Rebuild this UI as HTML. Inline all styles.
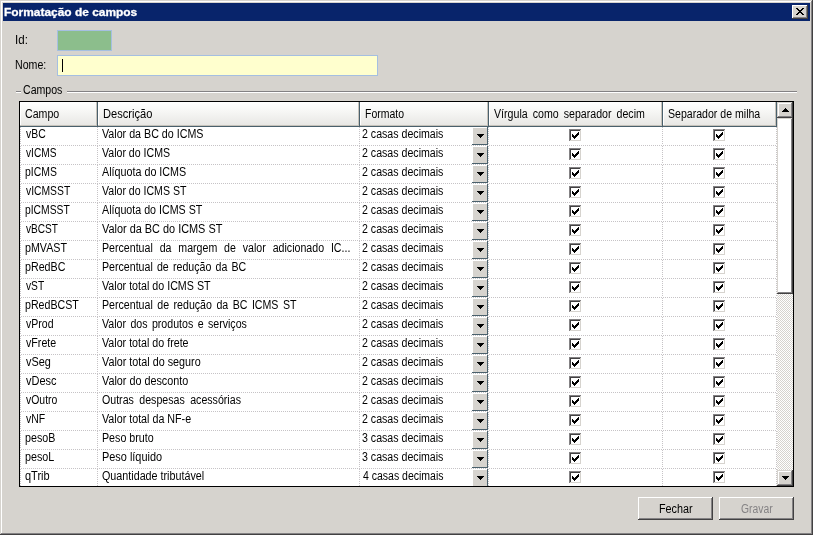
<!DOCTYPE html><html><head><meta charset="utf-8"><title>Formatação de campos</title><style>
html,body{margin:0;padding:0;background:#d6d3ce;}
body{width:813px;height:535px;overflow:hidden;background:#d6d3ce;font-family:"Liberation Sans",sans-serif;font-size:12px;color:#000;position:relative;}
.abs{position:absolute;}
#win{position:absolute;left:0;top:0;width:813px;height:535px;background:#d6d3ce;overflow:hidden;}
.b{position:absolute;}
#txt{position:absolute;left:0;top:0;width:813px;height:535px;will-change:transform;}
.t{position:absolute;display:block;white-space:nowrap;line-height:16px;height:16px;transform-origin:0 0;font-size:12px;}
#title{position:absolute;left:3px;top:3px;width:807px;height:18px;background:#08246b;}
#close{position:absolute;left:792px;top:5px;width:16px;height:14px;background:#d6d3ce;box-shadow:inset -1px -1px 0 #424142,inset 1px 1px 0 #fff,inset -2px -2px 0 #848284,inset 2px 2px 0 #d6d3ce;}
#idbox{position:absolute;left:57px;top:30px;width:55px;height:21px;box-sizing:border-box;border:1px solid #a5bfe1;background:#8cbe8c;}
#nomebox{position:absolute;left:57px;top:55px;width:321px;height:21px;box-sizing:border-box;border:1px solid #a5bfe1;background:#ffffce;}
#caret{position:absolute;left:62px;top:59px;width:1px;height:13px;background:#000;}
.gl{position:absolute;height:1px;}
#grid{position:absolute;left:19px;top:101px;width:775px;height:386px;box-sizing:border-box;border:1px solid #000;background:#fff;overflow:hidden;}
.hc{position:absolute;top:0;height:25px;background:linear-gradient(#ffffff 0%,#f6f6f4 40%,#e6e5e2 100%);box-shadow:inset 0 -1px 0 #4a606c,inset -1px 0 0 #4a606c,inset -2px -2px 0 #c6c2ba,inset 1px 1px 0 #fff;}
.hl{position:absolute;left:1px;width:756px;height:1px;background:repeating-linear-gradient(90deg,#c6c3c6 0 1px,transparent 1px 2px);}
.vl{position:absolute;width:1px;height:18px;background:repeating-linear-gradient(180deg,#c6c3c6 0 1px,transparent 1px 2px);}
.cb{position:absolute;width:13px;height:13px;background:#fff;box-shadow:inset -1px -1px 0 #fff,inset 1px 1px 0 #848284,inset -2px -2px 0 #d6d3ce,inset 2px 2px 0 #424142;}
.cb svg{position:absolute;left:3px;top:3px;}
.dd{position:absolute;left:452px;width:15px;height:18px;}
.dd u{position:absolute;left:1px;top:1px;width:14px;height:16px;background:#d6d3ce;}
.dd b{position:absolute;left:15px;top:0;width:1px;height:18px;background:#4a606c;}
.dd s{position:absolute;left:0;top:17px;width:16px;height:1px;background:#4a606c;}
.dd svg{position:absolute;left:5px;top:7px;}
.btn{position:absolute;top:497px;width:75px;height:23px;background:#d6d3ce;box-shadow:inset -1px -1px 0 #424142,inset 1px 1px 0 #fff,inset -2px -2px 0 #848284,inset 2px 2px 0 #d6d3ce;}
.sbb{position:absolute;left:757px;width:16px;height:16px;background:#d6d3ce;box-shadow:inset -1px -1px 0 #424142,inset 1px 1px 0 #d6d3ce,inset -2px -2px 0 #848284,inset 2px 2px 0 #fff;}
.sbb svg{position:absolute;}
</style></head><body>
<div id="win">
<div class="b" style="left:1px;top:1px;width:810px;height:1px;background:#fff"></div>
<div class="b" style="left:1px;top:1px;width:1px;height:532px;background:#fff"></div>
<div class="b" style="left:811px;top:1px;width:1px;height:533px;background:#848284"></div>
<div class="b" style="left:1px;top:533px;width:811px;height:1px;background:#848284"></div>
<div class="b" style="left:812px;top:0;width:1px;height:535px;background:#424142"></div>
<div class="b" style="left:0;top:534px;width:813px;height:1px;background:#424142"></div>
<div id="title"></div>
<div id="close"><svg class="abs" style="left:4px;top:3px" width="8" height="7" viewBox="0 0 8 7"><path d="M0 0h2v1h1v1h2v-1h1v-1h2v1h-1v1h-1v1h-1v1h1v1h1v1h1v1h-2v-1h-1v-1h-2v1h-1v1h-2v-1h1v-1h1v-1h1v-1h-1v-1h-1v-1h-1z" fill="#000"/></svg></div>
<div id="idbox"></div>
<div id="nomebox"></div><div id="caret"></div>
<div class="gl" style="left:16px;top:91px;width:5px;background:#848284"></div>
<div class="gl" style="left:16px;top:92px;width:5px;background:#fff"></div>
<div class="gl" style="left:67px;top:91px;width:730px;background:#848284"></div>
<div class="gl" style="left:67px;top:92px;width:730px;background:#fff"></div>
<div id="grid">
<div class="hc" style="left:0px;width:78px"></div>
<div class="hc" style="left:78px;width:262px"></div>
<div class="hc" style="left:340px;width:129px"></div>
<div class="hc" style="left:469px;width:174px"></div>
<div class="hc" style="left:643px;width:114px"></div>
<div class="hl" style="top:43px"></div>
<div class="vl" style="left:0px;top:25px"></div>
<div class="vl" style="left:77px;top:25px"></div>
<div class="vl" style="left:339px;top:25px"></div>
<div class="vl" style="left:468px;top:25px"></div>
<div class="vl" style="left:642px;top:25px"></div>
<div class="vl" style="left:756px;top:25px"></div>
<div class="dd" style="top:25px"><u></u><b></b><s></s><svg width="7" height="4" viewBox="0 0 7 4"><path d="M0 0h7v1h-1v1h-1v1h-1v1h-1v-1h-1v-1h-1v-1h-1z" fill="#000"/></svg></div>
<div class="cb" style="left:549px;top:27px"><svg width="7" height="7" viewBox="0 0 7 7"><path d="M0 2v3h1v1h1v1h1v-1h1v-1h1v-1h1v-1h1v-3h-1v1h-1v1h-1v1h-1v1h-1v-1h-1v-1z" fill="#000"/></svg></div>
<div class="cb" style="left:693px;top:27px"><svg width="7" height="7" viewBox="0 0 7 7"><path d="M0 2v3h1v1h1v1h1v-1h1v-1h1v-1h1v-1h1v-3h-1v1h-1v1h-1v1h-1v1h-1v-1h-1v-1z" fill="#000"/></svg></div>
<div class="hl" style="top:62px"></div>
<div class="vl" style="left:0px;top:44px"></div>
<div class="vl" style="left:77px;top:44px"></div>
<div class="vl" style="left:339px;top:44px"></div>
<div class="vl" style="left:468px;top:44px"></div>
<div class="vl" style="left:642px;top:44px"></div>
<div class="vl" style="left:756px;top:44px"></div>
<div class="dd" style="top:44px"><u></u><b></b><s></s><svg width="7" height="4" viewBox="0 0 7 4"><path d="M0 0h7v1h-1v1h-1v1h-1v1h-1v-1h-1v-1h-1v-1h-1z" fill="#000"/></svg></div>
<div class="cb" style="left:549px;top:46px"><svg width="7" height="7" viewBox="0 0 7 7"><path d="M0 2v3h1v1h1v1h1v-1h1v-1h1v-1h1v-1h1v-3h-1v1h-1v1h-1v1h-1v1h-1v-1h-1v-1z" fill="#000"/></svg></div>
<div class="cb" style="left:693px;top:46px"><svg width="7" height="7" viewBox="0 0 7 7"><path d="M0 2v3h1v1h1v1h1v-1h1v-1h1v-1h1v-1h1v-3h-1v1h-1v1h-1v1h-1v1h-1v-1h-1v-1z" fill="#000"/></svg></div>
<div class="hl" style="top:81px"></div>
<div class="vl" style="left:0px;top:63px"></div>
<div class="vl" style="left:77px;top:63px"></div>
<div class="vl" style="left:339px;top:63px"></div>
<div class="vl" style="left:468px;top:63px"></div>
<div class="vl" style="left:642px;top:63px"></div>
<div class="vl" style="left:756px;top:63px"></div>
<div class="dd" style="top:63px"><u></u><b></b><s></s><svg width="7" height="4" viewBox="0 0 7 4"><path d="M0 0h7v1h-1v1h-1v1h-1v1h-1v-1h-1v-1h-1v-1h-1z" fill="#000"/></svg></div>
<div class="cb" style="left:549px;top:65px"><svg width="7" height="7" viewBox="0 0 7 7"><path d="M0 2v3h1v1h1v1h1v-1h1v-1h1v-1h1v-1h1v-3h-1v1h-1v1h-1v1h-1v1h-1v-1h-1v-1z" fill="#000"/></svg></div>
<div class="cb" style="left:693px;top:65px"><svg width="7" height="7" viewBox="0 0 7 7"><path d="M0 2v3h1v1h1v1h1v-1h1v-1h1v-1h1v-1h1v-3h-1v1h-1v1h-1v1h-1v1h-1v-1h-1v-1z" fill="#000"/></svg></div>
<div class="hl" style="top:100px"></div>
<div class="vl" style="left:0px;top:82px"></div>
<div class="vl" style="left:77px;top:82px"></div>
<div class="vl" style="left:339px;top:82px"></div>
<div class="vl" style="left:468px;top:82px"></div>
<div class="vl" style="left:642px;top:82px"></div>
<div class="vl" style="left:756px;top:82px"></div>
<div class="dd" style="top:82px"><u></u><b></b><s></s><svg width="7" height="4" viewBox="0 0 7 4"><path d="M0 0h7v1h-1v1h-1v1h-1v1h-1v-1h-1v-1h-1v-1h-1z" fill="#000"/></svg></div>
<div class="cb" style="left:549px;top:84px"><svg width="7" height="7" viewBox="0 0 7 7"><path d="M0 2v3h1v1h1v1h1v-1h1v-1h1v-1h1v-1h1v-3h-1v1h-1v1h-1v1h-1v1h-1v-1h-1v-1z" fill="#000"/></svg></div>
<div class="cb" style="left:693px;top:84px"><svg width="7" height="7" viewBox="0 0 7 7"><path d="M0 2v3h1v1h1v1h1v-1h1v-1h1v-1h1v-1h1v-3h-1v1h-1v1h-1v1h-1v1h-1v-1h-1v-1z" fill="#000"/></svg></div>
<div class="hl" style="top:119px"></div>
<div class="vl" style="left:0px;top:101px"></div>
<div class="vl" style="left:77px;top:101px"></div>
<div class="vl" style="left:339px;top:101px"></div>
<div class="vl" style="left:468px;top:101px"></div>
<div class="vl" style="left:642px;top:101px"></div>
<div class="vl" style="left:756px;top:101px"></div>
<div class="dd" style="top:101px"><u></u><b></b><s></s><svg width="7" height="4" viewBox="0 0 7 4"><path d="M0 0h7v1h-1v1h-1v1h-1v1h-1v-1h-1v-1h-1v-1h-1z" fill="#000"/></svg></div>
<div class="cb" style="left:549px;top:103px"><svg width="7" height="7" viewBox="0 0 7 7"><path d="M0 2v3h1v1h1v1h1v-1h1v-1h1v-1h1v-1h1v-3h-1v1h-1v1h-1v1h-1v1h-1v-1h-1v-1z" fill="#000"/></svg></div>
<div class="cb" style="left:693px;top:103px"><svg width="7" height="7" viewBox="0 0 7 7"><path d="M0 2v3h1v1h1v1h1v-1h1v-1h1v-1h1v-1h1v-3h-1v1h-1v1h-1v1h-1v1h-1v-1h-1v-1z" fill="#000"/></svg></div>
<div class="hl" style="top:138px"></div>
<div class="vl" style="left:0px;top:120px"></div>
<div class="vl" style="left:77px;top:120px"></div>
<div class="vl" style="left:339px;top:120px"></div>
<div class="vl" style="left:468px;top:120px"></div>
<div class="vl" style="left:642px;top:120px"></div>
<div class="vl" style="left:756px;top:120px"></div>
<div class="dd" style="top:120px"><u></u><b></b><s></s><svg width="7" height="4" viewBox="0 0 7 4"><path d="M0 0h7v1h-1v1h-1v1h-1v1h-1v-1h-1v-1h-1v-1h-1z" fill="#000"/></svg></div>
<div class="cb" style="left:549px;top:122px"><svg width="7" height="7" viewBox="0 0 7 7"><path d="M0 2v3h1v1h1v1h1v-1h1v-1h1v-1h1v-1h1v-3h-1v1h-1v1h-1v1h-1v1h-1v-1h-1v-1z" fill="#000"/></svg></div>
<div class="cb" style="left:693px;top:122px"><svg width="7" height="7" viewBox="0 0 7 7"><path d="M0 2v3h1v1h1v1h1v-1h1v-1h1v-1h1v-1h1v-3h-1v1h-1v1h-1v1h-1v1h-1v-1h-1v-1z" fill="#000"/></svg></div>
<div class="hl" style="top:157px"></div>
<div class="vl" style="left:0px;top:139px"></div>
<div class="vl" style="left:77px;top:139px"></div>
<div class="vl" style="left:339px;top:139px"></div>
<div class="vl" style="left:468px;top:139px"></div>
<div class="vl" style="left:642px;top:139px"></div>
<div class="vl" style="left:756px;top:139px"></div>
<div class="dd" style="top:139px"><u></u><b></b><s></s><svg width="7" height="4" viewBox="0 0 7 4"><path d="M0 0h7v1h-1v1h-1v1h-1v1h-1v-1h-1v-1h-1v-1h-1z" fill="#000"/></svg></div>
<div class="cb" style="left:549px;top:141px"><svg width="7" height="7" viewBox="0 0 7 7"><path d="M0 2v3h1v1h1v1h1v-1h1v-1h1v-1h1v-1h1v-3h-1v1h-1v1h-1v1h-1v1h-1v-1h-1v-1z" fill="#000"/></svg></div>
<div class="cb" style="left:693px;top:141px"><svg width="7" height="7" viewBox="0 0 7 7"><path d="M0 2v3h1v1h1v1h1v-1h1v-1h1v-1h1v-1h1v-3h-1v1h-1v1h-1v1h-1v1h-1v-1h-1v-1z" fill="#000"/></svg></div>
<div class="hl" style="top:176px"></div>
<div class="vl" style="left:0px;top:158px"></div>
<div class="vl" style="left:77px;top:158px"></div>
<div class="vl" style="left:339px;top:158px"></div>
<div class="vl" style="left:468px;top:158px"></div>
<div class="vl" style="left:642px;top:158px"></div>
<div class="vl" style="left:756px;top:158px"></div>
<div class="dd" style="top:158px"><u></u><b></b><s></s><svg width="7" height="4" viewBox="0 0 7 4"><path d="M0 0h7v1h-1v1h-1v1h-1v1h-1v-1h-1v-1h-1v-1h-1z" fill="#000"/></svg></div>
<div class="cb" style="left:549px;top:160px"><svg width="7" height="7" viewBox="0 0 7 7"><path d="M0 2v3h1v1h1v1h1v-1h1v-1h1v-1h1v-1h1v-3h-1v1h-1v1h-1v1h-1v1h-1v-1h-1v-1z" fill="#000"/></svg></div>
<div class="cb" style="left:693px;top:160px"><svg width="7" height="7" viewBox="0 0 7 7"><path d="M0 2v3h1v1h1v1h1v-1h1v-1h1v-1h1v-1h1v-3h-1v1h-1v1h-1v1h-1v1h-1v-1h-1v-1z" fill="#000"/></svg></div>
<div class="hl" style="top:195px"></div>
<div class="vl" style="left:0px;top:177px"></div>
<div class="vl" style="left:77px;top:177px"></div>
<div class="vl" style="left:339px;top:177px"></div>
<div class="vl" style="left:468px;top:177px"></div>
<div class="vl" style="left:642px;top:177px"></div>
<div class="vl" style="left:756px;top:177px"></div>
<div class="dd" style="top:177px"><u></u><b></b><s></s><svg width="7" height="4" viewBox="0 0 7 4"><path d="M0 0h7v1h-1v1h-1v1h-1v1h-1v-1h-1v-1h-1v-1h-1z" fill="#000"/></svg></div>
<div class="cb" style="left:549px;top:179px"><svg width="7" height="7" viewBox="0 0 7 7"><path d="M0 2v3h1v1h1v1h1v-1h1v-1h1v-1h1v-1h1v-3h-1v1h-1v1h-1v1h-1v1h-1v-1h-1v-1z" fill="#000"/></svg></div>
<div class="cb" style="left:693px;top:179px"><svg width="7" height="7" viewBox="0 0 7 7"><path d="M0 2v3h1v1h1v1h1v-1h1v-1h1v-1h1v-1h1v-3h-1v1h-1v1h-1v1h-1v1h-1v-1h-1v-1z" fill="#000"/></svg></div>
<div class="hl" style="top:214px"></div>
<div class="vl" style="left:0px;top:196px"></div>
<div class="vl" style="left:77px;top:196px"></div>
<div class="vl" style="left:339px;top:196px"></div>
<div class="vl" style="left:468px;top:196px"></div>
<div class="vl" style="left:642px;top:196px"></div>
<div class="vl" style="left:756px;top:196px"></div>
<div class="dd" style="top:196px"><u></u><b></b><s></s><svg width="7" height="4" viewBox="0 0 7 4"><path d="M0 0h7v1h-1v1h-1v1h-1v1h-1v-1h-1v-1h-1v-1h-1z" fill="#000"/></svg></div>
<div class="cb" style="left:549px;top:198px"><svg width="7" height="7" viewBox="0 0 7 7"><path d="M0 2v3h1v1h1v1h1v-1h1v-1h1v-1h1v-1h1v-3h-1v1h-1v1h-1v1h-1v1h-1v-1h-1v-1z" fill="#000"/></svg></div>
<div class="cb" style="left:693px;top:198px"><svg width="7" height="7" viewBox="0 0 7 7"><path d="M0 2v3h1v1h1v1h1v-1h1v-1h1v-1h1v-1h1v-3h-1v1h-1v1h-1v1h-1v1h-1v-1h-1v-1z" fill="#000"/></svg></div>
<div class="hl" style="top:233px"></div>
<div class="vl" style="left:0px;top:215px"></div>
<div class="vl" style="left:77px;top:215px"></div>
<div class="vl" style="left:339px;top:215px"></div>
<div class="vl" style="left:468px;top:215px"></div>
<div class="vl" style="left:642px;top:215px"></div>
<div class="vl" style="left:756px;top:215px"></div>
<div class="dd" style="top:215px"><u></u><b></b><s></s><svg width="7" height="4" viewBox="0 0 7 4"><path d="M0 0h7v1h-1v1h-1v1h-1v1h-1v-1h-1v-1h-1v-1h-1z" fill="#000"/></svg></div>
<div class="cb" style="left:549px;top:217px"><svg width="7" height="7" viewBox="0 0 7 7"><path d="M0 2v3h1v1h1v1h1v-1h1v-1h1v-1h1v-1h1v-3h-1v1h-1v1h-1v1h-1v1h-1v-1h-1v-1z" fill="#000"/></svg></div>
<div class="cb" style="left:693px;top:217px"><svg width="7" height="7" viewBox="0 0 7 7"><path d="M0 2v3h1v1h1v1h1v-1h1v-1h1v-1h1v-1h1v-3h-1v1h-1v1h-1v1h-1v1h-1v-1h-1v-1z" fill="#000"/></svg></div>
<div class="hl" style="top:252px"></div>
<div class="vl" style="left:0px;top:234px"></div>
<div class="vl" style="left:77px;top:234px"></div>
<div class="vl" style="left:339px;top:234px"></div>
<div class="vl" style="left:468px;top:234px"></div>
<div class="vl" style="left:642px;top:234px"></div>
<div class="vl" style="left:756px;top:234px"></div>
<div class="dd" style="top:234px"><u></u><b></b><s></s><svg width="7" height="4" viewBox="0 0 7 4"><path d="M0 0h7v1h-1v1h-1v1h-1v1h-1v-1h-1v-1h-1v-1h-1z" fill="#000"/></svg></div>
<div class="cb" style="left:549px;top:236px"><svg width="7" height="7" viewBox="0 0 7 7"><path d="M0 2v3h1v1h1v1h1v-1h1v-1h1v-1h1v-1h1v-3h-1v1h-1v1h-1v1h-1v1h-1v-1h-1v-1z" fill="#000"/></svg></div>
<div class="cb" style="left:693px;top:236px"><svg width="7" height="7" viewBox="0 0 7 7"><path d="M0 2v3h1v1h1v1h1v-1h1v-1h1v-1h1v-1h1v-3h-1v1h-1v1h-1v1h-1v1h-1v-1h-1v-1z" fill="#000"/></svg></div>
<div class="hl" style="top:271px"></div>
<div class="vl" style="left:0px;top:253px"></div>
<div class="vl" style="left:77px;top:253px"></div>
<div class="vl" style="left:339px;top:253px"></div>
<div class="vl" style="left:468px;top:253px"></div>
<div class="vl" style="left:642px;top:253px"></div>
<div class="vl" style="left:756px;top:253px"></div>
<div class="dd" style="top:253px"><u></u><b></b><s></s><svg width="7" height="4" viewBox="0 0 7 4"><path d="M0 0h7v1h-1v1h-1v1h-1v1h-1v-1h-1v-1h-1v-1h-1z" fill="#000"/></svg></div>
<div class="cb" style="left:549px;top:255px"><svg width="7" height="7" viewBox="0 0 7 7"><path d="M0 2v3h1v1h1v1h1v-1h1v-1h1v-1h1v-1h1v-3h-1v1h-1v1h-1v1h-1v1h-1v-1h-1v-1z" fill="#000"/></svg></div>
<div class="cb" style="left:693px;top:255px"><svg width="7" height="7" viewBox="0 0 7 7"><path d="M0 2v3h1v1h1v1h1v-1h1v-1h1v-1h1v-1h1v-3h-1v1h-1v1h-1v1h-1v1h-1v-1h-1v-1z" fill="#000"/></svg></div>
<div class="hl" style="top:290px"></div>
<div class="vl" style="left:0px;top:272px"></div>
<div class="vl" style="left:77px;top:272px"></div>
<div class="vl" style="left:339px;top:272px"></div>
<div class="vl" style="left:468px;top:272px"></div>
<div class="vl" style="left:642px;top:272px"></div>
<div class="vl" style="left:756px;top:272px"></div>
<div class="dd" style="top:272px"><u></u><b></b><s></s><svg width="7" height="4" viewBox="0 0 7 4"><path d="M0 0h7v1h-1v1h-1v1h-1v1h-1v-1h-1v-1h-1v-1h-1z" fill="#000"/></svg></div>
<div class="cb" style="left:549px;top:274px"><svg width="7" height="7" viewBox="0 0 7 7"><path d="M0 2v3h1v1h1v1h1v-1h1v-1h1v-1h1v-1h1v-3h-1v1h-1v1h-1v1h-1v1h-1v-1h-1v-1z" fill="#000"/></svg></div>
<div class="cb" style="left:693px;top:274px"><svg width="7" height="7" viewBox="0 0 7 7"><path d="M0 2v3h1v1h1v1h1v-1h1v-1h1v-1h1v-1h1v-3h-1v1h-1v1h-1v1h-1v1h-1v-1h-1v-1z" fill="#000"/></svg></div>
<div class="hl" style="top:309px"></div>
<div class="vl" style="left:0px;top:291px"></div>
<div class="vl" style="left:77px;top:291px"></div>
<div class="vl" style="left:339px;top:291px"></div>
<div class="vl" style="left:468px;top:291px"></div>
<div class="vl" style="left:642px;top:291px"></div>
<div class="vl" style="left:756px;top:291px"></div>
<div class="dd" style="top:291px"><u></u><b></b><s></s><svg width="7" height="4" viewBox="0 0 7 4"><path d="M0 0h7v1h-1v1h-1v1h-1v1h-1v-1h-1v-1h-1v-1h-1z" fill="#000"/></svg></div>
<div class="cb" style="left:549px;top:293px"><svg width="7" height="7" viewBox="0 0 7 7"><path d="M0 2v3h1v1h1v1h1v-1h1v-1h1v-1h1v-1h1v-3h-1v1h-1v1h-1v1h-1v1h-1v-1h-1v-1z" fill="#000"/></svg></div>
<div class="cb" style="left:693px;top:293px"><svg width="7" height="7" viewBox="0 0 7 7"><path d="M0 2v3h1v1h1v1h1v-1h1v-1h1v-1h1v-1h1v-3h-1v1h-1v1h-1v1h-1v1h-1v-1h-1v-1z" fill="#000"/></svg></div>
<div class="hl" style="top:328px"></div>
<div class="vl" style="left:0px;top:310px"></div>
<div class="vl" style="left:77px;top:310px"></div>
<div class="vl" style="left:339px;top:310px"></div>
<div class="vl" style="left:468px;top:310px"></div>
<div class="vl" style="left:642px;top:310px"></div>
<div class="vl" style="left:756px;top:310px"></div>
<div class="dd" style="top:310px"><u></u><b></b><s></s><svg width="7" height="4" viewBox="0 0 7 4"><path d="M0 0h7v1h-1v1h-1v1h-1v1h-1v-1h-1v-1h-1v-1h-1z" fill="#000"/></svg></div>
<div class="cb" style="left:549px;top:312px"><svg width="7" height="7" viewBox="0 0 7 7"><path d="M0 2v3h1v1h1v1h1v-1h1v-1h1v-1h1v-1h1v-3h-1v1h-1v1h-1v1h-1v1h-1v-1h-1v-1z" fill="#000"/></svg></div>
<div class="cb" style="left:693px;top:312px"><svg width="7" height="7" viewBox="0 0 7 7"><path d="M0 2v3h1v1h1v1h1v-1h1v-1h1v-1h1v-1h1v-3h-1v1h-1v1h-1v1h-1v1h-1v-1h-1v-1z" fill="#000"/></svg></div>
<div class="hl" style="top:347px"></div>
<div class="vl" style="left:0px;top:329px"></div>
<div class="vl" style="left:77px;top:329px"></div>
<div class="vl" style="left:339px;top:329px"></div>
<div class="vl" style="left:468px;top:329px"></div>
<div class="vl" style="left:642px;top:329px"></div>
<div class="vl" style="left:756px;top:329px"></div>
<div class="dd" style="top:329px"><u></u><b></b><s></s><svg width="7" height="4" viewBox="0 0 7 4"><path d="M0 0h7v1h-1v1h-1v1h-1v1h-1v-1h-1v-1h-1v-1h-1z" fill="#000"/></svg></div>
<div class="cb" style="left:549px;top:331px"><svg width="7" height="7" viewBox="0 0 7 7"><path d="M0 2v3h1v1h1v1h1v-1h1v-1h1v-1h1v-1h1v-3h-1v1h-1v1h-1v1h-1v1h-1v-1h-1v-1z" fill="#000"/></svg></div>
<div class="cb" style="left:693px;top:331px"><svg width="7" height="7" viewBox="0 0 7 7"><path d="M0 2v3h1v1h1v1h1v-1h1v-1h1v-1h1v-1h1v-3h-1v1h-1v1h-1v1h-1v1h-1v-1h-1v-1z" fill="#000"/></svg></div>
<div class="hl" style="top:366px"></div>
<div class="vl" style="left:0px;top:348px"></div>
<div class="vl" style="left:77px;top:348px"></div>
<div class="vl" style="left:339px;top:348px"></div>
<div class="vl" style="left:468px;top:348px"></div>
<div class="vl" style="left:642px;top:348px"></div>
<div class="vl" style="left:756px;top:348px"></div>
<div class="dd" style="top:348px"><u></u><b></b><s></s><svg width="7" height="4" viewBox="0 0 7 4"><path d="M0 0h7v1h-1v1h-1v1h-1v1h-1v-1h-1v-1h-1v-1h-1z" fill="#000"/></svg></div>
<div class="cb" style="left:549px;top:350px"><svg width="7" height="7" viewBox="0 0 7 7"><path d="M0 2v3h1v1h1v1h1v-1h1v-1h1v-1h1v-1h1v-3h-1v1h-1v1h-1v1h-1v1h-1v-1h-1v-1z" fill="#000"/></svg></div>
<div class="cb" style="left:693px;top:350px"><svg width="7" height="7" viewBox="0 0 7 7"><path d="M0 2v3h1v1h1v1h1v-1h1v-1h1v-1h1v-1h1v-3h-1v1h-1v1h-1v1h-1v1h-1v-1h-1v-1z" fill="#000"/></svg></div>
<div class="vl" style="left:0px;top:367px"></div>
<div class="vl" style="left:77px;top:367px"></div>
<div class="vl" style="left:339px;top:367px"></div>
<div class="vl" style="left:468px;top:367px"></div>
<div class="vl" style="left:642px;top:367px"></div>
<div class="vl" style="left:756px;top:367px"></div>
<div class="dd" style="top:367px"><u></u><b></b><s></s><svg width="7" height="4" viewBox="0 0 7 4"><path d="M0 0h7v1h-1v1h-1v1h-1v1h-1v-1h-1v-1h-1v-1h-1z" fill="#000"/></svg></div>
<div class="cb" style="left:549px;top:369px"><svg width="7" height="7" viewBox="0 0 7 7"><path d="M0 2v3h1v1h1v1h1v-1h1v-1h1v-1h1v-1h1v-3h-1v1h-1v1h-1v1h-1v1h-1v-1h-1v-1z" fill="#000"/></svg></div>
<div class="cb" style="left:693px;top:369px"><svg width="7" height="7" viewBox="0 0 7 7"><path d="M0 2v3h1v1h1v1h1v-1h1v-1h1v-1h1v-1h1v-3h-1v1h-1v1h-1v1h-1v1h-1v-1h-1v-1z" fill="#000"/></svg></div>
<div class="abs" style="left:757px;top:0;width:16px;height:384px;background:#fff;background-image:conic-gradient(#d6d3ce 25%,#fff 0 50%,#d6d3ce 0 75%,#fff 0);background-size:2px 2px"></div>
<div class="sbb" style="top:0"><svg style="left:5px;top:6px" width="7" height="4" viewBox="0 0 7 4"><path d="M3 0h1v1h1v1h1v1h1v1h-7v-1h1v-1h1v-1h1z" fill="#000"/></svg></div>
<div class="sbb" style="top:16px;height:176px;background:#fff"></div>
<div class="sbb" style="top:368px"><svg style="left:5px;top:6px" width="7" height="4" viewBox="0 0 7 4"><path d="M0 0h7v1h-1v1h-1v1h-1v1h-1v-1h-1v-1h-1v-1h-1z" fill="#000"/></svg></div>
</div>
<div class="btn" style="left:638px"></div>
<div class="btn" style="left:719px"></div>
<div id="txt">
<span class="t" style="left:4.0px;top:4px;transform:scaleX(1.0843);font-weight:bold;font-size:11px;color:#fff;-webkit-text-stroke:0.3px #fff;">Formatação de campos</span>
<span class="t" style="left:14.5px;top:32px;transform:scaleX(0.9636);">Id:</span>
<span class="t" style="left:15.0px;top:57px;transform:scaleX(0.8848);">Nome:</span>
<span class="t" style="left:22.5px;top:82px;transform:scaleX(0.8814);">Campos</span>
<span class="t" style="left:24.5px;top:106px;transform:scaleX(0.8838);">Campo</span>
<span class="t" style="left:102.5px;top:106px;transform:scaleX(0.9250);">Descrição</span>
<span class="t" style="left:365.0px;top:106px;transform:scaleX(0.8721);">Formato</span>
<span class="t" style="left:493.5px;top:106px;transform:scaleX(0.8850);word-spacing:2.35px;">Vírgula como separador decim</span>
<span class="t" style="left:667.5px;top:106px;transform:scaleX(0.8808);">Separador de milha</span>
<span class="t" style="left:26.0px;top:126px;transform:scaleX(0.8682);">vBC</span>
<span class="t" style="left:101.5px;top:126px;transform:scaleX(0.8912);">Valor da BC do ICMS</span>
<span class="t" style="left:362.0px;top:126px;transform:scaleX(0.8846);">2 casas decimais</span>
<span class="t" style="left:26.0px;top:145px;transform:scaleX(0.8444);">vICMS</span>
<span class="t" style="left:101.5px;top:145px;transform:scaleX(0.8818);">Valor do ICMS</span>
<span class="t" style="left:362.0px;top:145px;transform:scaleX(0.8846);">2 casas decimais</span>
<span class="t" style="left:25.0px;top:164px;transform:scaleX(0.8686);">pICMS</span>
<span class="t" style="left:101.5px;top:164px;transform:scaleX(0.8957);">Alíquota do ICMS</span>
<span class="t" style="left:362.0px;top:164px;transform:scaleX(0.8846);">2 casas decimais</span>
<span class="t" style="left:26.0px;top:183px;transform:scaleX(0.8608);">vICMSST</span>
<span class="t" style="left:101.5px;top:183px;transform:scaleX(0.8812);">Valor do ICMS ST</span>
<span class="t" style="left:362.0px;top:183px;transform:scaleX(0.8846);">2 casas decimais</span>
<span class="t" style="left:25.0px;top:202px;transform:scaleX(0.8608);">pICMSST</span>
<span class="t" style="left:101.5px;top:202px;transform:scaleX(0.8903);">Alíquota do ICMS ST</span>
<span class="t" style="left:362.0px;top:202px;transform:scaleX(0.8846);">2 casas decimais</span>
<span class="t" style="left:26.0px;top:221px;transform:scaleX(0.8421);">vBCST</span>
<span class="t" style="left:101.5px;top:221px;transform:scaleX(0.9083);">Valor da BC do ICMS ST</span>
<span class="t" style="left:362.0px;top:221px;transform:scaleX(0.8846);">2 casas decimais</span>
<span class="t" style="left:25.0px;top:240px;transform:scaleX(0.8913);">pMVAST</span>
<span class="t" style="left:101.5px;top:240px;transform:scaleX(0.8850);word-spacing:4.42px;">Percentual da margem de valor adicionado IC...</span>
<span class="t" style="left:362.0px;top:240px;transform:scaleX(0.8846);">2 casas decimais</span>
<span class="t" style="left:25.0px;top:259px;transform:scaleX(0.8909);">pRedBC</span>
<span class="t" style="left:101.5px;top:259px;transform:scaleX(0.8850);word-spacing:1.40px;">Percentual de redução da BC</span>
<span class="t" style="left:362.0px;top:259px;transform:scaleX(0.8846);">2 casas decimais</span>
<span class="t" style="left:26.0px;top:278px;transform:scaleX(0.8524);">vST</span>
<span class="t" style="left:101.5px;top:278px;transform:scaleX(0.8910);">Valor total do ICMS ST</span>
<span class="t" style="left:362.0px;top:278px;transform:scaleX(0.8846);">2 casas decimais</span>
<span class="t" style="left:25.0px;top:297px;transform:scaleX(0.8864);">pRedBCST</span>
<span class="t" style="left:101.5px;top:297px;transform:scaleX(0.8850);word-spacing:1.72px;">Percentual de redução da BC ICMS ST</span>
<span class="t" style="left:362.0px;top:297px;transform:scaleX(0.8846);">2 casas decimais</span>
<span class="t" style="left:26.0px;top:316px;transform:scaleX(0.8774);">vProd</span>
<span class="t" style="left:101.5px;top:316px;transform:scaleX(0.8850);word-spacing:1.63px;">Valor dos produtos e serviços</span>
<span class="t" style="left:362.0px;top:316px;transform:scaleX(0.8846);">2 casas decimais</span>
<span class="t" style="left:26.0px;top:335px;transform:scaleX(0.8879);">vFrete</span>
<span class="t" style="left:101.5px;top:335px;transform:scaleX(0.8907);">Valor total do frete</span>
<span class="t" style="left:362.0px;top:335px;transform:scaleX(0.8846);">2 casas decimais</span>
<span class="t" style="left:26.0px;top:354px;transform:scaleX(0.9074);">vSeg</span>
<span class="t" style="left:101.5px;top:354px;transform:scaleX(0.8982);">Valor total do seguro</span>
<span class="t" style="left:362.0px;top:354px;transform:scaleX(0.8846);">2 casas decimais</span>
<span class="t" style="left:26.0px;top:373px;transform:scaleX(0.9152);">vDesc</span>
<span class="t" style="left:101.5px;top:373px;transform:scaleX(0.9000);">Valor do desconto</span>
<span class="t" style="left:362.0px;top:373px;transform:scaleX(0.8846);">2 casas decimais</span>
<span class="t" style="left:26.0px;top:392px;transform:scaleX(0.8694);">vOutro</span>
<span class="t" style="left:101.5px;top:392px;transform:scaleX(0.8850);word-spacing:2.80px;">Outras despesas acessórias</span>
<span class="t" style="left:362.0px;top:392px;transform:scaleX(0.8846);">2 casas decimais</span>
<span class="t" style="left:26.0px;top:411px;transform:scaleX(0.8727);">vNF</span>
<span class="t" style="left:101.5px;top:411px;transform:scaleX(0.8929);">Valor total da NF-e</span>
<span class="t" style="left:362.0px;top:411px;transform:scaleX(0.8846);">2 casas decimais</span>
<span class="t" style="left:25.0px;top:430px;transform:scaleX(0.8906);">pesoB</span>
<span class="t" style="left:101.5px;top:430px;transform:scaleX(0.8895);">Peso bruto</span>
<span class="t" style="left:362.0px;top:430px;transform:scaleX(0.8846);">3 casas decimais</span>
<span class="t" style="left:25.0px;top:449px;transform:scaleX(0.8968);">pesoL</span>
<span class="t" style="left:101.5px;top:449px;transform:scaleX(0.9092);">Peso líquido</span>
<span class="t" style="left:362.0px;top:449px;transform:scaleX(0.8846);">3 casas decimais</span>
<span class="t" style="left:25.0px;top:468px;transform:scaleX(0.9154);">qTrib</span>
<span class="t" style="left:101.5px;top:468px;transform:scaleX(0.8955);">Quantidade tributável</span>
<span class="t" style="left:362.5px;top:468px;transform:scaleX(0.8750);">4 casas decimais</span>
<span class="t" style="left:658.5px;top:501px;transform:scaleX(0.9000);">Fechar</span>
<span class="t" style="left:741.0px;top:501px;transform:scaleX(0.8611);color:#848284;">Gravar</span>
</div>
</div></body></html>
